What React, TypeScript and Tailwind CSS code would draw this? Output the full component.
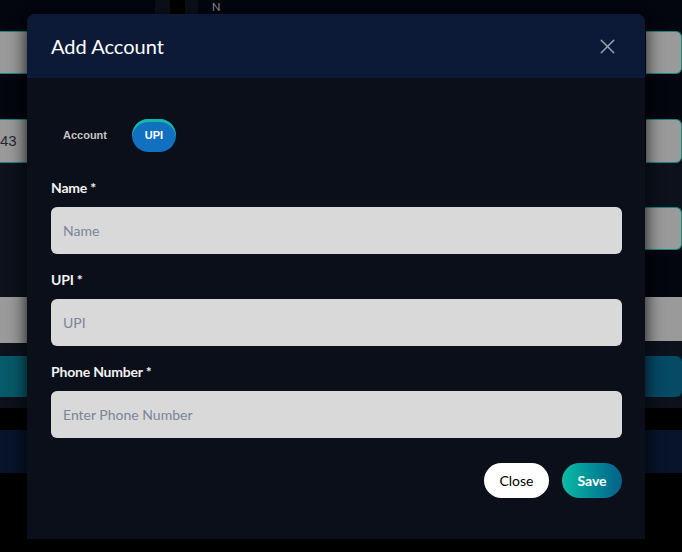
import { X } from "lucide-react";

const fields = [
  { label: "Name *", placeholder: "Name" },
  { label: "UPI *", placeholder: "UPI" },
  { label: "Phone Number *", placeholder: "Enter Phone Number" },
];

function BackdropPage() {
  // page behind the dimmed overlay
  return (
    <div className="flex flex-col h-full">
      <div className="flex h-[14px] pl-[155px] shrink-0">
        <div className="w-[15px] bg-[#0b0f18]" />
        <div className="w-[15px] bg-black" />
        <div className="w-[13px] bg-[#0b0f18]" />
        <span className="ml-[14px] text-[11px] leading-[14px] text-[#9a9a9a]">N</span>
      </div>
      <div className="flex justify-between mt-[17px] h-[43px] shrink-0">
        <div className="w-[28px] bg-[#9a9a9a] border-y border-[#0f8a80]" />
        <div className="w-[36px] bg-[#9a9a9a] border border-l-0 border-[#0f8a80] rounded-r-md" />
      </div>
      <div className="flex justify-between mt-[45px] h-[44px] shrink-0">
        <div className="w-[28px] bg-[#9a9a9a] border-y border-[#0f8a80] text-[15px] leading-[42px] text-[#1f2937] font-['Liberation_Sans',sans-serif]">
          43
        </div>
        <div className="w-[36px] bg-[#9a9a9a] border border-l-0 border-[#0f8a80] rounded-r-md" />
      </div>
      <div className="flex justify-between bg-[#0c111c] h-[245px] shrink-0">
        <div className="flex flex-col w-[28px]">
          <div className="h-[134px]" />
          <div className="h-[46px] bg-[#9a9a9a]" />
          <div className="h-[13px]" />
          <div className="h-[41px] bg-[#075a6a]" />
        </div>
        <div className="flex flex-col w-[37px]">
          <div className="h-[44px]" />
          <div className="h-[43px] bg-[#9a9a9a] border border-l-0 border-[#0f8a80] rounded-r-md" />
          <div className="h-[47px] bg-[#03050f]" />
          <div className="h-[44px] bg-[#9a9a9a]" />
          <div className="h-[15px]" />
          <div className="h-[41px] bg-[#064a66] rounded-r-md" />
        </div>
      </div>
      <div className="h-[22px] bg-black shrink-0" />
      <div className="h-[43px] bg-[#07142a] shrink-0" />
      <div className="flex-1 bg-black" />
    </div>
  );
}

export default function App() {
  return (
    <div className="relative w-[682px] h-[552px] overflow-hidden bg-[#03050f] font-['Lato','Noto_Sans',sans-serif]">
      <BackdropPage />

      {/* modal */}
      <div className="absolute left-[27px] top-[14px] w-[618px] h-[525px] flex flex-col rounded-t-lg bg-[#0b0f1a] shadow-[0_6px_18px_rgba(0,0,0,0.9)]">
        <div className="flex items-center justify-between h-[64px] pl-6 pr-6 rounded-t-lg bg-[#0c1a38]">
          <h2 className="text-[20px] text-white">Add Account</h2>
          <button className="text-[#9ca3af] mr-[1px]">
            <X size={25} strokeWidth={1.4} />
          </button>
        </div>

        <div className="flex flex-col pl-6 pr-[23px] pt-[41px]">
          <div className="flex items-center gap-3 font-['Liberation_Sans',sans-serif] text-[11px] font-bold">
            <button className="px-3 h-[33px] text-[#c4c4c4]">Account</button>
            <button className="w-[44px] h-[33px] ml-[1px] rounded-full bg-[#1170c0] text-white shadow-[inset_0_3px_0_#14b8a6]">
              UPI
            </button>
          </div>

          <div className="flex flex-col mt-[27px] gap-[17px]">
            {fields.map((f) => (
              <div key={f.label} className="flex flex-col gap-[10px]">
                <label className="text-[14px] leading-[18px] font-bold text-[#f2f2f2] tracking-[-0.2px]">
                  {f.label}
                </label>
                <input
                  placeholder={f.placeholder}
                  className="h-[47px] w-full rounded-md bg-[#d9d9d9] px-3 text-[14px] text-[#1f2937] placeholder:text-[#7b8597] outline-none"
                />
              </div>
            ))}
          </div>

          <div className="flex justify-end gap-[13px] mt-[25px]">
            <button className="h-[35px] w-[65px] rounded-full bg-white text-[14px] text-black">Close</button>
            <button className="h-[35px] w-[60px] rounded-full bg-gradient-to-r from-[#0fbca4] to-[#06608a] text-[14px] font-bold text-white">
              Save
            </button>
          </div>
        </div>
      </div>
    </div>
  );
}
